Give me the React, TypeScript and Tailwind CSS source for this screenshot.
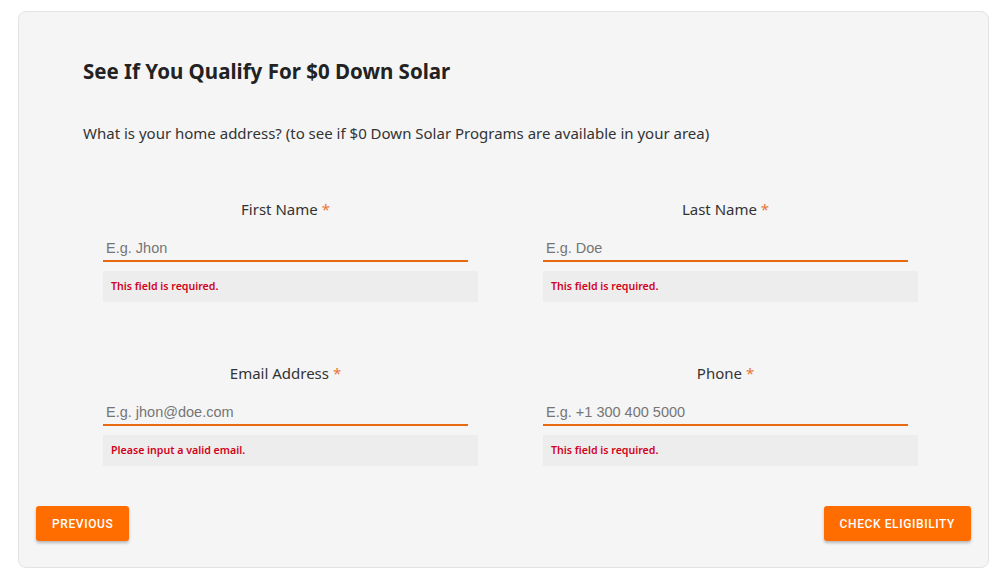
const fields = [
  { label: 'First Name', placeholder: 'E.g. Jhon', error: 'This field is required.' },
  { label: 'Last Name', placeholder: 'E.g. Doe', error: 'This field is required.' },
  { label: 'Email Address', placeholder: 'E.g. jhon@doe.com', error: 'Please input a valid email.' },
  { label: 'Phone', placeholder: 'E.g. +1 300 400 5000', error: 'This field is required.' },
]

function Field({ label, placeholder, error }: { label: string; placeholder: string; error: string }) {
  return (
    <div className="flex w-[375px] flex-col">
      <div className="w-[365px] text-center text-[15px] leading-[20px] text-[#333]">
        {label} <span className="text-[#e8773a]">*</span>
      </div>
      <input
        placeholder={placeholder}
        className="mt-[18px] h-[25px] w-[365px] border-b-2 border-[#e8690f] bg-transparent px-[3px] pb-[2px] font-['Liberation_Sans',sans-serif] text-[14.5px] text-[#333] outline-none placeholder:text-[#757575]"
      />
      <div className="mt-[9px] flex h-[31px] items-center bg-[#ededed] px-[8px] text-[10.6px] font-semibold text-[#d0021b]">
        {error}
      </div>
    </div>
  )
}

export default function App() {
  return (
    <div className="min-h-[578px] bg-white px-[18px] pt-[11px] font-['Noto_Sans',sans-serif]">
      <div className="h-[557px] w-[971px] rounded-[8px] border border-[#e3e3e3] bg-[#f5f5f5] px-[17px] pt-[45px]">
        <div className="pl-[47px]">
          <h1 className="text-[20.5px] font-bold leading-[28px] text-[#222]">See If You Qualify For $0 Down Solar</h1>
          <p className="mt-[37px] text-[15px] leading-[22px] text-[#333]">
            What is your home address? (to see if $0 Down Solar Programs are available in your area)
          </p>
        </div>
        <div className="mt-[55px] grid grid-cols-[375px_375px] gap-x-[65px] gap-y-[61px] pl-[67px]">
          {fields.map((f) => (
            <Field key={f.label} {...f} />
          ))}
        </div>
        <div className="mt-[40px] flex justify-between font-['Roboto',sans-serif]">
          <button className="h-[35px] rounded-[3px] bg-[#ff6c00] px-[16px] text-[12px] font-medium uppercase tracking-[0.05em] text-white shadow-[0_2px_3px_rgba(0,0,0,0.25)]">
            Previous
          </button>
          <button className="h-[35px] rounded-[3px] bg-[#ff6c00] px-[16px] text-[12px] font-medium uppercase tracking-[0.05em] text-white shadow-[0_2px_3px_rgba(0,0,0,0.25)]">
            Check Eligibility
          </button>
        </div>
      </div>
    </div>
  )
}
